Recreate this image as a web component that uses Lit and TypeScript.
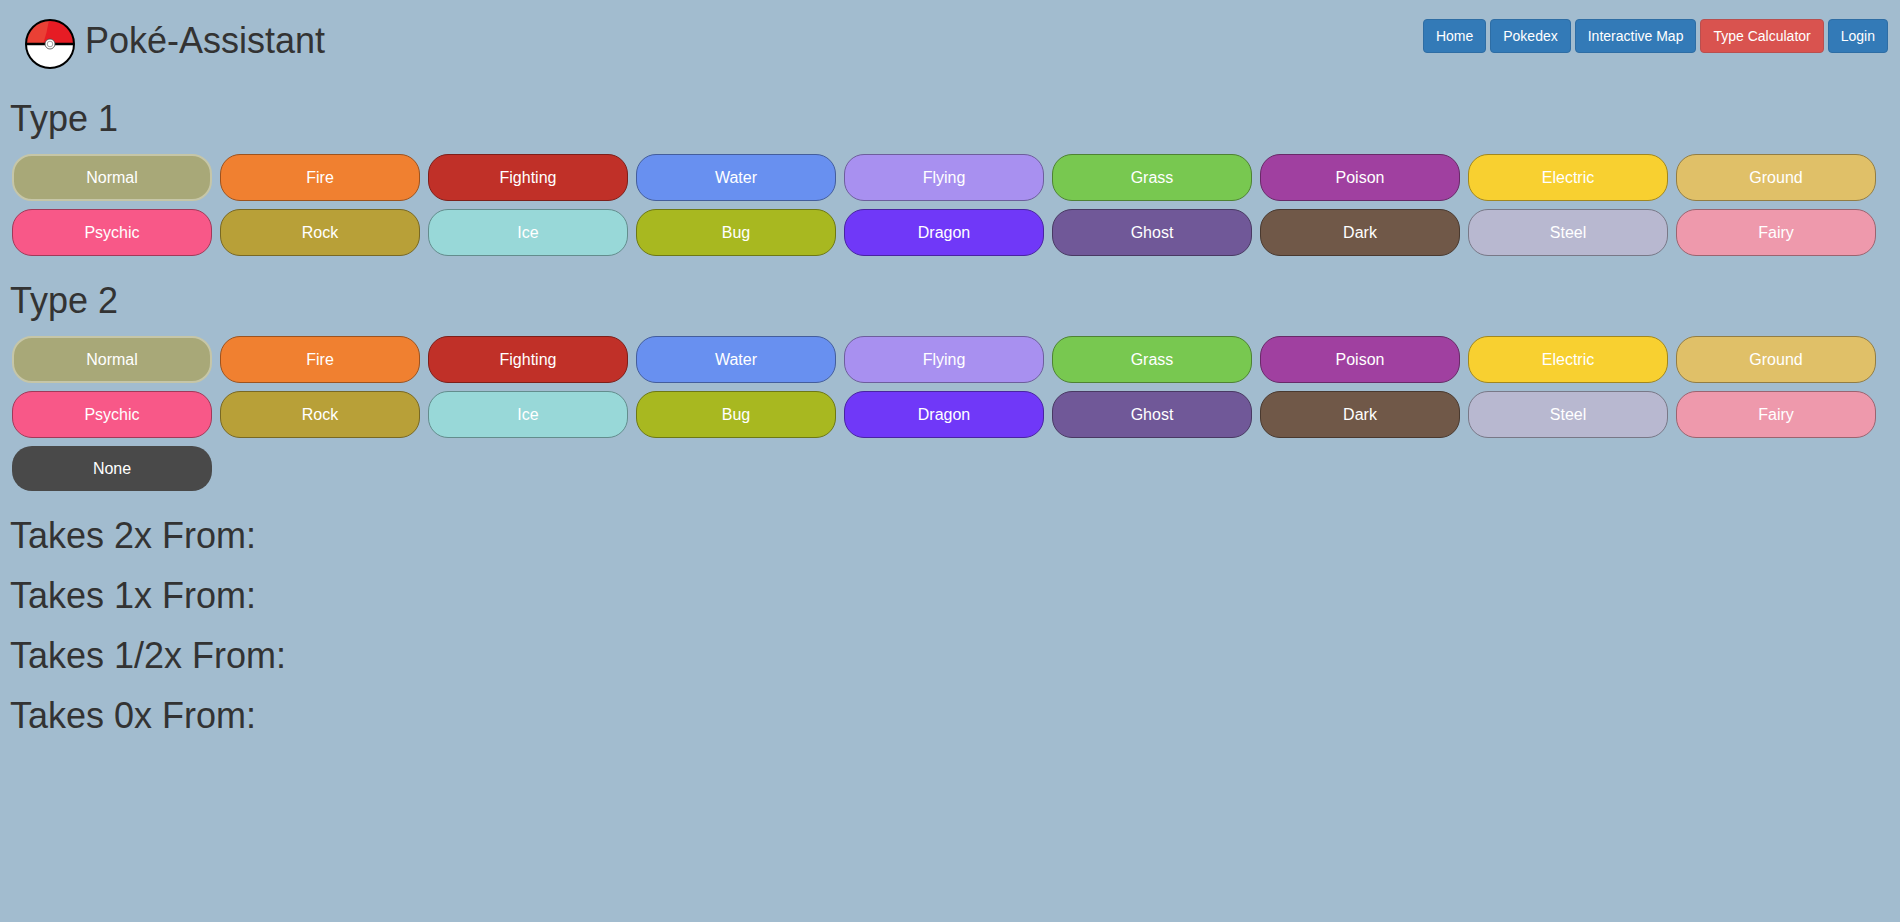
import { LitElement, html, css } from "lit";
import { customElement, property, state } from "lit/decorators.js";
import { classMap } from "lit/directives/class-map.js";
import { styleMap } from "lit/directives/style-map.js";

interface PokeType {
  name: string;
  fill: string;
  edge: string;
}

const TYPES: PokeType[] = [
  { name: "Normal", fill: "#a8a878", edge: "#6d6d4e" },
  { name: "Fire", fill: "#f08030", edge: "#9c531f" },
  { name: "Fighting", fill: "#c03028", edge: "#7d1f1a" },
  { name: "Water", fill: "#6890f0", edge: "#445e9c" },
  { name: "Flying", fill: "#a890f0", edge: "#6d5e9c" },
  { name: "Grass", fill: "#78c850", edge: "#4e8234" },
  { name: "Poison", fill: "#a040a0", edge: "#682a68" },
  { name: "Electric", fill: "#f8d030", edge: "#a1871f" },
  { name: "Ground", fill: "#e0c068", edge: "#927d44" },
  { name: "Psychic", fill: "#f85888", edge: "#a13959" },
  { name: "Rock", fill: "#b8a038", edge: "#786824" },
  { name: "Ice", fill: "#98d8d8", edge: "#638d8d" },
  { name: "Bug", fill: "#a8b820", edge: "#6d7815" },
  { name: "Dragon", fill: "#7038f8", edge: "#4924a1" },
  { name: "Ghost", fill: "#705898", edge: "#493963" },
  { name: "Dark", fill: "#705848", edge: "#49392f" },
  { name: "Steel", fill: "#b8b8d0", edge: "#787887" },
  { name: "Fairy", fill: "#ee99ac", edge: "#9b6470" },
];

const PAGES = ["Home", "Pokedex", "Interactive Map", "Type Calculator", "Login"];
const RESULTS = ["Takes 2x From:", "Takes 1x From:", "Takes 1/2x From:", "Takes 0x From:"];

@customElement("type-picker")
class TypePicker extends LitElement {
  @property() heading = "";
  @property({ type: Boolean }) optional = false;
  @state() selected = "Normal";

  static styles = css`
    :host {
      display: block;
      padding: 0 10px;
      margin-bottom: 25px;
    }
    .heading {
      margin: 0;
      font-size: 36px;
      font-weight: 500;
      line-height: 40px;
    }
    .tiles {
      display: flex;
      flex-wrap: wrap;
      gap: 8px;
      padding: 15px 2px 0;
    }
    .tile {
      box-sizing: border-box;
      width: 200px;
      padding: 11px 12px;
      border: 1px solid;
      border-radius: 20px;
      color: #fff;
      font: inherit;
      font-size: 16px;
      line-height: 23px;
      text-align: center;
      cursor: pointer;
    }
    .selected {
      padding: 10px 11px;
      border-width: 2px;
    }
    .none {
      border: 0;
      background: #494949;
    }
  `;

  render() {
    return html`
      <h1 class="heading">${this.heading}</h1>
      <div class="tiles" role="group" aria-label=${this.heading}>
        ${TYPES.map((t) => {
          const on = t.name === this.selected;
          return html`<button
            type="button"
            class=${classMap({ tile: true, selected: on })}
            style=${styleMap({ background: t.fill, borderColor: on ? "#c6c6a7" : t.edge })}
            aria-pressed=${on ? "true" : "false"}
            @click=${() => (this.selected = t.name)}
          >${t.name}</button>`;
        })}
        ${this.optional
          ? html`<button type="button" class="tile none" @click=${() => (this.selected = "None")}>None</button>`
          : null}
      </div>
    `;
  }
}

@customElement("app-root")
class AppRoot extends LitElement {
  static styles = css`
    :host {
      display: block;
      box-sizing: border-box;
      min-height: 100vh;
      background: #a2bccf;
      color: #333;
      font-family: "Liberation Sans", Arial, sans-serif;
    }
    .header {
      display: flex;
      justify-content: space-between;
      align-items: flex-start;
      padding: 19px 12px 30px 25px;
    }
    .brand {
      display: flex;
      gap: 10px;
    }
    .logo {
      display: block;
      width: 50px;
      height: 50px;
    }
    .title {
      margin: 0;
      font-size: 36px;
      font-weight: 500;
      line-height: 44px;
    }
    .nav {
      display: flex;
      gap: 4px;
    }
    .link {
      padding: 6px 12px;
      border: 1px solid #2e6da4;
      border-radius: 4px;
      background: #337ab7;
      color: #fff;
      font-size: 14px;
      line-height: 20px;
      text-decoration: none;
    }
    .current {
      border-color: #b94f4f;
      background: #d9534f;
    }
    .results {
      display: flex;
      flex-direction: column;
      gap: 20px;
      padding: 0 10px;
    }
    .result {
      margin: 0;
      font-size: 36px;
      font-weight: 500;
      line-height: 40px;
    }
  `;

  render() {
    return html`
      <header class="header">
        <div class="brand">
          <svg class="logo" viewBox="0 0 50 50" aria-hidden="true">
            <circle cx="25" cy="25" r="24" fill="#fff" />
            <path d="M1 25a24 24 0 0 1 48 0z" fill="#e61c24" />
            <path d="M1 25A24 24 0 0 1 24 1Q22 14 18 25z" fill="#ea4035" />
            <path d="M1 25h48" stroke="#000" stroke-width="2.6" />
            <circle cx="25" cy="25" r="24" fill="none" stroke="#000" stroke-width="2" />
            <circle cx="25" cy="25" r="5" fill="#fff" stroke="#444" stroke-width="0.8" />
            <circle cx="25" cy="25" r="2.8" fill="#fff" stroke="#777" stroke-width="0.7" />
          </svg>
          <h1 class="title">Poké-Assistant</h1>
        </div>
        <nav class="nav">
          ${PAGES.map(
            (p) => html`<a href="#" class=${classMap({ link: true, current: p === "Type Calculator" })}>${p}</a>`
          )}
        </nav>
      </header>
      <type-picker heading="Type 1"></type-picker>
      <type-picker heading="Type 2" optional></type-picker>
      <section class="results">
        ${RESULTS.map((r) => html`<h1 class="result">${r}</h1>`)}
      </section>
    `;
  }
}
